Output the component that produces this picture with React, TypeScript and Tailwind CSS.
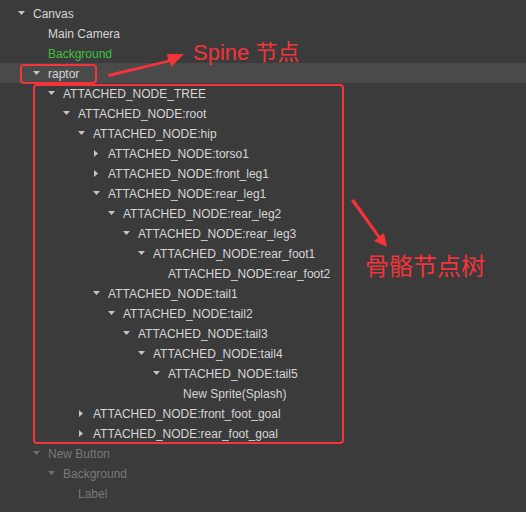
import React from 'react';

type Arrow = 'down' | 'right' | 'none';
type Tone = 'normal' | 'green' | 'dim';

interface TreeRow {
  label: string;
  level: number;
  arrow: Arrow;
  tone?: Tone;
  selected?: boolean;
}

const rows: TreeRow[] = [
  { label: 'Canvas', level: 0, arrow: 'down' },
  { label: 'Main Camera', level: 1, arrow: 'none' },
  { label: 'Background', level: 1, arrow: 'none', tone: 'green' },
  { label: 'raptor', level: 1, arrow: 'down', selected: true },
  { label: 'ATTACHED_NODE_TREE', level: 2, arrow: 'down' },
  { label: 'ATTACHED_NODE:root', level: 3, arrow: 'down' },
  { label: 'ATTACHED_NODE:hip', level: 4, arrow: 'down' },
  { label: 'ATTACHED_NODE:torso1', level: 5, arrow: 'right' },
  { label: 'ATTACHED_NODE:front_leg1', level: 5, arrow: 'right' },
  { label: 'ATTACHED_NODE:rear_leg1', level: 5, arrow: 'down' },
  { label: 'ATTACHED_NODE:rear_leg2', level: 6, arrow: 'down' },
  { label: 'ATTACHED_NODE:rear_leg3', level: 7, arrow: 'down' },
  { label: 'ATTACHED_NODE:rear_foot1', level: 8, arrow: 'down' },
  { label: 'ATTACHED_NODE:rear_foot2', level: 9, arrow: 'none' },
  { label: 'ATTACHED_NODE:tail1', level: 5, arrow: 'down' },
  { label: 'ATTACHED_NODE:tail2', level: 6, arrow: 'down' },
  { label: 'ATTACHED_NODE:tail3', level: 7, arrow: 'down' },
  { label: 'ATTACHED_NODE:tail4', level: 8, arrow: 'down' },
  { label: 'ATTACHED_NODE:tail5', level: 9, arrow: 'down' },
  { label: 'New Sprite(Splash)', level: 10, arrow: 'none' },
  { label: 'ATTACHED_NODE:front_foot_goal', level: 4, arrow: 'right' },
  { label: 'ATTACHED_NODE:rear_foot_goal', level: 4, arrow: 'right' },
  { label: 'New Button', level: 1, arrow: 'down', tone: 'dim' },
  { label: 'Background', level: 2, arrow: 'down', tone: 'dim' },
  { label: 'Label', level: 3, arrow: 'none', tone: 'dim' },
];

// indent = 18 + 15 * level
const indent = [
  'pl-[18px]',
  'pl-[33px]',
  'pl-[48px]',
  'pl-[63px]',
  'pl-[78px]',
  'pl-[93px]',
  'pl-[108px]',
  'pl-[123px]',
  'pl-[138px]',
  'pl-[153px]',
  'pl-[168px]',
];

const toneClass: Record<Tone, string> = {
  normal: 'text-[#d6d6d6]',
  green: 'text-[#3ec23e]',
  dim: 'text-[#787878]',
};

function Caret({ arrow, dim }: { arrow: Arrow; dim: boolean }) {
  const fill = dim ? '#6f6f6f' : '#c4c4c4';
  if (arrow === 'down') {
    return (
      <svg width="7" height="4" viewBox="0 0 7 4">
        <path d="M0 0 L7 0 L3.5 4 Z" fill={fill} />
      </svg>
    );
  }
  if (arrow === 'right') {
    return (
      <svg width="4" height="7" viewBox="0 0 4 7" className="ml-[1px]">
        <path d="M0 0 L4 3.5 L0 7 Z" fill={fill} />
      </svg>
    );
  }
  return null;
}

function Row({ row }: { row: TreeRow }) {
  const tone = row.tone ?? 'normal';
  return (
    <div
      className={`flex h-5 items-center ${indent[row.level]} ${
        row.selected ? 'bg-[#4a4a4a]' : ''
      }`}
    >
      <span className="flex w-[15px] flex-shrink-0 items-center">
        <Caret arrow={row.arrow} dim={tone === 'dim'} />
      </span>
      <span className={`whitespace-nowrap pt-px text-[12px] leading-5 ${toneClass[tone]}`}>
        {row.label}
      </span>
    </div>
  );
}

export default function App() {
  return (
    <div
      className="relative h-[512px] w-[526px] overflow-hidden bg-[#3b3b3b] pt-[3px]"
      style={{ fontFamily: '"Liberation Sans", Arial, "Noto Sans CJK SC", sans-serif' }}
    >
      <div className="flex flex-col">
        {rows.map((row, index) => (
          <Row key={index} row={row} />
        ))}
      </div>

      {/* annotations */}
      <div className="absolute left-[20px] top-[64px] h-[20px] w-[77px] rounded-[4px] border-2 border-[#f5333a]" />
      <div className="absolute left-[33px] top-[84px] h-[360px] w-[311px] rounded-[4px] border-2 border-[#f5333a]" />

      <svg className="absolute left-0 top-0" width="526" height="512" viewBox="0 0 526 512">
        <path d="M108 74 L168 60 L167 54 L184 54 L171 67 L170 62 L109 77 Z" fill="#f5333a" />
        <path d="M351 201 L354 199 L380 236 L384 233 L387 247 L374 241 L378 238 Z" fill="#f5333a" />
      </svg>

      <div className="absolute left-[193px] top-[39px] whitespace-nowrap text-[22px] leading-[28px] text-[#f5333a]">
        Spine 节点
      </div>
      <div className="absolute left-[365px] top-[252px] whitespace-nowrap text-[24px] leading-[30px] text-[#f5333a]">
        骨骼节点树
      </div>
    </div>
  );
}
